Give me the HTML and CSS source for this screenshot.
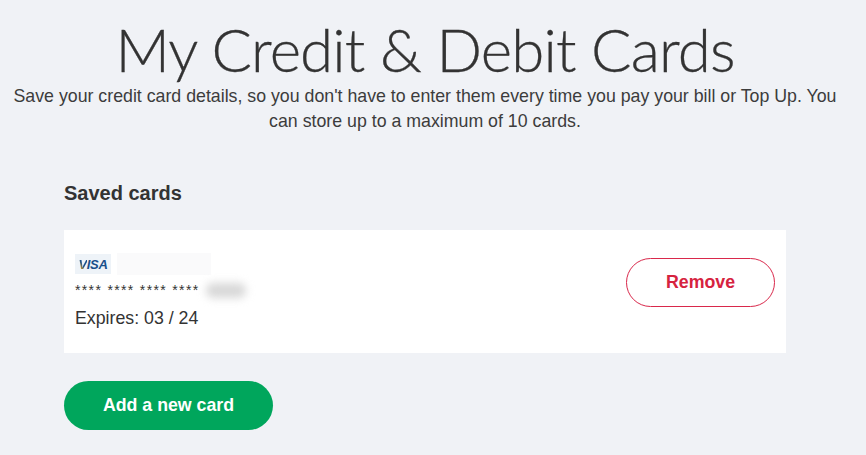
FILE: index.html
```html
<!DOCTYPE html>
<html lang="en">
<head>
<meta charset="utf-8">
<title>My Credit &amp; Debit Cards</title>
<link rel="stylesheet" href="styles.css">
</head>
<body>
<main class="page">
  <header class="intro">
    <h1 class="title">My Credit &amp; Debit Cards</h1>
    <p class="lead">Save your credit card details, so you don't have to enter them every time you pay your bill or Top Up. You can store up to a maximum of 10 cards.</p>
  </header>
  <section class="saved">
    <h2 class="saved-title">Saved cards</h2>
    <div class="card">
      <div class="card-info">
        <div class="card-brand">
          <span class="visa"><span class="visa-v">V</span>ISA</span>
          <span class="blur-name"></span>
        </div>
        <div class="card-number">
          <span class="digits">**** **** **** ****</span>
          <span class="blur-digits"></span>
        </div>
        <div class="expiry">Expires: 03 / 24</div>
      </div>
      <button class="btn-remove">Remove</button>
    </div>
    <button class="btn-add">Add a new card</button>
  </section>
</main>
</body>
</html>
```
FILE: styles.css
```css
* { box-sizing: border-box; }
html, body { margin: 0; height: 100%; overflow: hidden; }
body {
  background: #f0f2f6;
  color: #333;
  font-family: "Liberation Sans", Arial, sans-serif;
  font-size: 17.75px;
}
.page { padding-top: 16px; }
.intro { text-align: center; padding: 0 16px 0 0; }
.title {
  margin: 0;
  font-family: Lato, sans-serif;
  font-weight: 300;
  font-size: 60px;
  line-height: 66px;
  letter-spacing: -0.85px;
  color: #333;
  -webkit-text-stroke: 0.3px #333;
}
.lead { margin: 2px 0 0; line-height: 25px; color: #3c3c3c; }
.saved { padding: 47px 80px 0 64px; }
.saved-title { margin: 0 0 25px; font-size: 20px; line-height: 24px; font-weight: 700; }
.card {
  display: flex;
  align-items: flex-start;
  justify-content: space-between;
  height: 123px;
  padding: 23px 11px 0;
  background: #fff;
}
.card-brand { display: flex; align-items: center; gap: 6px; height: 22px; }
.visa {
  display: flex;
  align-items: center;
  justify-content: center;
  width: 36px;
  height: 20px;
  background: #eef3f8;
  color: #1a4f8a;
  font-size: 13px;
  font-weight: 700;
  font-style: italic;
  letter-spacing: -0.3px;
}
.visa-v {
  background: linear-gradient(60deg, #e0a020 25%, #1a4f8a 50%);
  -webkit-background-clip: text;
  background-clip: text;
  color: transparent;
}
.blur-name { width: 94px; height: 22px; background: #fafafb; }
.card-number { display: flex; align-items: center; gap: 6px; height: 22px; margin-top: 4px; }
.digits { font-size: 14px; letter-spacing: 1.35px; }
.blur-digits {
  width: 40px;
  height: 15px;
  background: #d8d8d8;
  border-radius: 7px;
  filter: blur(4px);
}
.expiry { margin-top: 5px; line-height: 24px; }
.btn-remove {
  width: 149px;
  height: 49px;
  margin-top: 5px;
  border: 1px solid #d9284b;
  border-radius: 25px;
  background: #fff;
  color: #d6233f;
  font: 700 17.75px "Liberation Sans", Arial, sans-serif;
}
.btn-add {
  display: block;
  width: 209px;
  height: 49px;
  margin-top: 28px;
  border: 0;
  border-radius: 25px;
  background: #00a65c;
  color: #fff;
  font: 700 17.75px "Liberation Sans", Arial, sans-serif;
}
```
